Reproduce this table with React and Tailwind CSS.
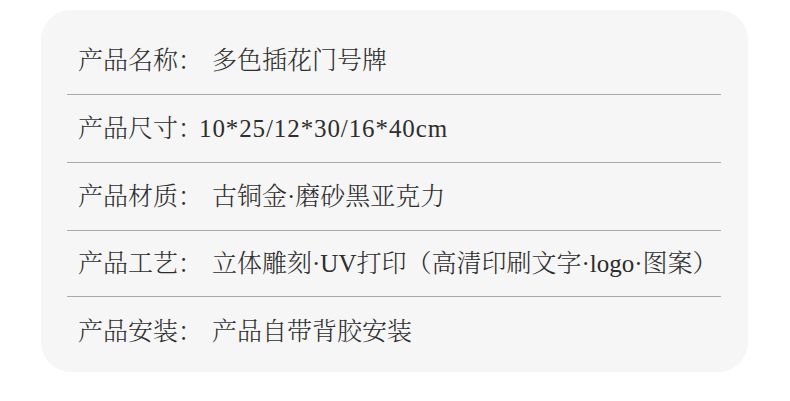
import React from "react";

const rows = [
  { label: "产品名称：", value: "多色插花门号牌", w: "w-[134px]", h: "h-[68px]" },
  { label: "产品尺寸：", value: "10*25/12*30/16*40cm", w: "w-[121px]", h: "h-[68px]", latin: true },
  { label: "产品材质：", value: "古铜金·磨砂黑亚克力", w: "w-[134px]", h: "h-[68px]" },
  { label: "产品工艺：", value: "立体雕刻·UV打印（高清印刷文字·logo·图案）", w: "w-[134px]", h: "h-[66px]" },
  { label: "产品安装：", value: "产品自带背胶安装", w: "w-[134px]", h: "h-[68px]" },
];

export default function App() {
  return (
    <div className="w-[790px] h-[401px] bg-white pt-[10px] pl-[41px]">
      <div
        className="w-[707px] h-[362px] rounded-[30px] bg-[#f6f6f6] pl-[26px] pr-[27px] pt-[17px] text-[#2e2e2e] font-light"
        style={{ fontFamily: '"Liberation Serif", "Noto Serif CJK SC", "Noto Sans CJK SC", serif' }}
      >
        {rows.map((r, i) => (
          <div
            key={i}
            className={`${r.h} flex items-center pl-[11px] text-[25px] leading-none ${
              i < rows.length - 1 ? "border-b border-[#a9a9a9]" : ""
            }`}
          >
            <span className={`${r.w} shrink-0 whitespace-nowrap`}>{r.label}</span>
            <span className={`whitespace-nowrap ${r.latin ? "tracking-[0.9px]" : ""}`}>{r.value}</span>
          </div>
        ))}
      </div>
    </div>
  );
}
